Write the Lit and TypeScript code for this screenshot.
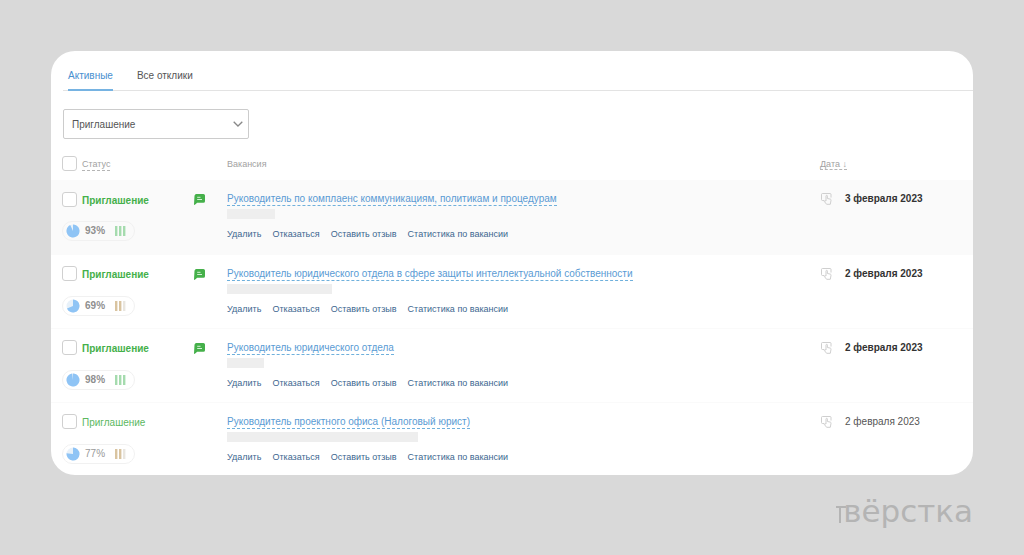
import { LitElement, html, svg, css } from "lit";
import { customElement, property } from "lit/decorators.js";
import { classMap } from "lit/directives/class-map.js";
import { styleMap } from "lit/directives/style-map.js";

interface Application {
  status: string;
  title: string;
  employerWidth: number;
  match: number;
  high: boolean;
  unread: boolean;
  chat: boolean;
  date: string;
}

const ROWS: Application[] = [
  { status: "Приглашение", title: "Руководитель по комплаенс коммуникациям, политикам и процедурам", employerWidth: 48, match: 93, high: true, unread: true, chat: true, date: "3 февраля 2023" },
  { status: "Приглашение", title: "Руководитель юридического отдела в сфере защиты интеллектуальной собственности", employerWidth: 105, match: 69, high: false, unread: true, chat: true, date: "2 февраля 2023" },
  { status: "Приглашение", title: "Руководитель юридического отдела", employerWidth: 37, match: 98, high: true, unread: true, chat: true, date: "2 февраля 2023" },
  { status: "Приглашение", title: "Руководитель проектного офиса (Налоговый юрист)", employerWidth: 191, match: 77, high: false, unread: false, chat: false, date: "2 февраля 2023" },
];

const ACTIONS = ["Удалить", "Отказаться", "Оставить отзыв", "Статистика по вакансии"];

@customElement("match-badge")
export class MatchBadge extends LitElement {
  @property({ type: Number }) value = 0;
  @property({ type: Boolean }) high = false;
  @property({ type: Boolean }) bold = false;

  static styles = css`
    :host { display: block; }
    .badge {
      display: inline-flex; align-items: center; box-sizing: border-box;
      height: 20px; width: 73px; padding-left: 3px;
      border: 1px solid #f1f1f1; border-radius: 10px;
      color: #999; font-size: 10px; line-height: 18px;
    }
    .bold { font-weight: bold; color: #8f8f8f; }
    .pie { width: 14px; height: 14px; margin-right: 5px; }
    .value { width: 30px; }
    .bars { width: 11px; height: 12px; }
  `;

  render() {
    const a = (this.value / 100) * Math.PI * 2;
    const x = 7 + 6.5 * Math.sin(a);
    const y = 7 - 6.5 * Math.cos(a);
    const color = this.high ? "#a5dbae" : "#d9c4a0";
    return html`<span class=${classMap({ badge: true, bold: this.bold })}>
      <svg class="pie" viewBox="0 0 14 14" aria-hidden="true">
        <circle cx="7" cy="7" r="6.5" fill="#e8f1f9" />
        <path d="M7 7V.5A6.5 6.5 0 1 1 ${x} ${y}Z" fill="#8fc4f5" />
      </svg>
      <span class="value">${this.value}%</span>
      <svg class="bars" viewBox="0 0 11 12" aria-hidden="true">
        ${[0, 4, 8].map((p, i) => svg`<rect x=${p} y="1" width="2.4" height="10" fill=${i === 2 && !this.high ? "#e9e6e0" : color} />`)}
      </svg>
    </span>`;
  }
}

@customElement("app-root")
export class AppRoot extends LitElement {
  static styles = css`
    :host {
      display: block; box-sizing: border-box; min-height: 100vh;
      padding: 51px 51px 0; background: #d9d9d9;
      font-family: "Liberation Sans", Arial, sans-serif; font-size: 10px; line-height: 14px; color: #444;
    }
    .card { background: #fff; border-radius: 24px; overflow: hidden; }
    .tabs { display: flex; gap: 24px; margin-left: 12px; padding: 14px 5px 0; border-bottom: 1px solid #e3e3e3; }
    .tab { padding: 4px 0 6px; margin-bottom: -1px; border-bottom: 2px solid transparent; color: #555; text-decoration: none; }
    .tab.active { color: #4a90d0; border-bottom-color: #76b3e2; }
    .filter { display: grid; width: 186px; margin: 18px 0 16px 12px; align-items: center; }
    .filter select {
      grid-area: 1 / 1; appearance: none; width: 100%; height: 30px; padding: 1px 8px 0;
      border: 1px solid #ccc; border-radius: 2px; background: #fff; color: #555; font: inherit;
    }
    .filter svg { grid-area: 1 / 1; justify-self: end; width: 10px; height: 6px; margin-right: 6px; pointer-events: none; }
    table { width: 100%; table-layout: fixed; border-collapse: collapse; }
    .col-status { width: 142px; }
    .col-chat { width: 34px; }
    .col-date { width: 205px; }
    th { padding: 0; height: 25px; font-size: 9px; line-height: 12px; font-weight: normal; text-align: left; vertical-align: top; color: #a2a2a2; }
    .dashed { border-bottom: 1px dashed #b5b5b5; }
    .label { display: flex; align-items: center; gap: 5px; padding-left: 11px; }
    th .label span { margin-top: 3px; }
    .th-text { padding-top: 3px; }
    .sort { color: inherit; text-decoration: none; }
    .date-head { padding-left: 52px; }
    input[type="checkbox"] { appearance: none; width: 15px; height: 15px; margin: 0; border: 1px solid #d0d0d0; border-radius: 3px; background: #fff; }
    td { box-sizing: border-box; height: 74px; padding: 0; vertical-align: top; border-bottom: 1px solid #fafafa; }
    tr:last-child td { border-bottom: 0; height: 73px; }
    .hover { background: #fafafa; }
    .status { padding-top: 11px; }
    .status .label { height: 16px; color: #5cb85f; }
    .status span { padding-top: 3px; }
    .unread .status .label, .unread .date { font-weight: bold; }
    .unread .status .label { color: #45b04a; }
    match-badge { margin: 14px 0 0 11px; }
    .chat { display: block; width: 11px; height: 11px; margin: 14px 0 0 1px; }
    .vacancy { padding-top: 13px; }
    .title { display: block; width: fit-content; color: #5a9bd4; text-decoration: none; line-height: 12px; border-bottom: 1px dashed #6fb0dc; }
    .employer { height: 10px; margin-top: 3px; background: #eee; }
    .actions { display: flex; gap: 11px; margin-top: 9px; font-size: 9px; line-height: 12px; }
    .actions button { padding: 0; border: 0; background: none; color: #3d6790; font: inherit; white-space: nowrap; cursor: pointer; }
    .date { display: flex; gap: 13px; padding: 12px 0 0 53px; color: #555; }
    .unread .date { color: #333; }
    .tap { width: 11px; height: 12px; margin-top: 1px; }
    .brand { display: flex; justify-content: flex-end; margin-top: 16px; color: #b4b4b4; font-family: "DejaVu Sans", sans-serif; font-size: 31px; line-height: 40px; }
    .brand svg { width: 10px; height: 40px; margin-right: -3px; }
  `;

  private chatIcon() {
    return html`<svg class="chat" viewBox="0 0 11 11" role="img" aria-label="Чат">
      <path d="M2.4 0H9.4Q11 0 11 1.6V7.2Q11 8.8 9.4 8.8H3.2L.6 11Q0 11 0 10.3L.5 1.7Q.7 0 2.4 0Z" fill="#45b04a" />
      <path d="M3.2 3.3H6.5M3.2 5.5H8" stroke="#d5f0d6" stroke-width="1" />
    </svg>`;
  }

  private tapIcon() {
    return html`<svg class="tap" viewBox="0 0 11 12" fill="none" stroke="#c9c9c9" stroke-width=".9" aria-hidden="true">
      <path d="M3 7.5H1.5Q.5 7.5 .5 6.5V1.5Q.5.5 1.5.5H9Q10 .5 10 1.5V4.5" />
      <path d="M5 8V3.2Q5 2.3 5.7 2.3T6.4 3.2V5.5L9.3 6.1Q10.2 6.4 10 7.3L9.3 11.3H5.6L3.4 8.5Q3.2 7.6 4.2 7.7L5 8.4" />
    </svg>`;
  }

  private row(r: Application, i: number) {
    return html`<tr class=${classMap({ unread: r.unread, hover: i === 0 })}>
      <td class="status">
        <label class="label"><input type="checkbox" /><span>${r.status}</span></label>
        <match-badge .value=${r.match} .high=${r.high} .bold=${r.unread}></match-badge>
      </td>
      <td>${r.chat ? this.chatIcon() : ""}</td>
      <td class="vacancy">
        <a class="title" href="#">${r.title}</a>
        <div class="employer" style=${styleMap({ width: `${r.employerWidth}px` })}></div>
        <div class="actions">${ACTIONS.map((a) => html`<button type="button">${a}</button>`)}</div>
      </td>
      <td><div class="date">${this.tapIcon()}<span>${r.date}</span></div></td>
    </tr>`;
  }

  render() {
    return html`
      <main class="card">
        <nav class="tabs">
          <a class="tab active" href="#">Активные</a>
          <a class="tab" href="#">Все отклики</a>
        </nav>
        <div class="filter">
          <select aria-label="Статус отклика"><option>Приглашение</option></select>
          <svg viewBox="0 0 10 6" fill="none" stroke="#888" stroke-width="1.3" aria-hidden="true"><path d="M.7.7 5 5 9.3.7" /></svg>
        </div>
        <table>
          <colgroup><col class="col-status" /><col class="col-chat" /><col /><col class="col-date" /></colgroup>
          <thead><tr>
            <th><label class="label"><input type="checkbox" /><span class="dashed">Статус</span></label></th>
            <th></th>
            <th><div class="th-text">Вакансия</div></th>
            <th><div class="th-text date-head"><a class="sort dashed" href="#">Дата ↓</a></div></th>
          </tr></thead>
          <tbody>${ROWS.map((r, i) => this.row(r, i))}</tbody>
        </table>
      </main>
      <footer class="brand">
        <svg viewBox="0 0 10 40" fill="none" stroke="#b4b4b4" stroke-width="2" aria-hidden="true"><path d="M0 16H10M4 16V32" /></svg>
        <span>вёрстка</span>
      </footer>
    `;
  }
}
